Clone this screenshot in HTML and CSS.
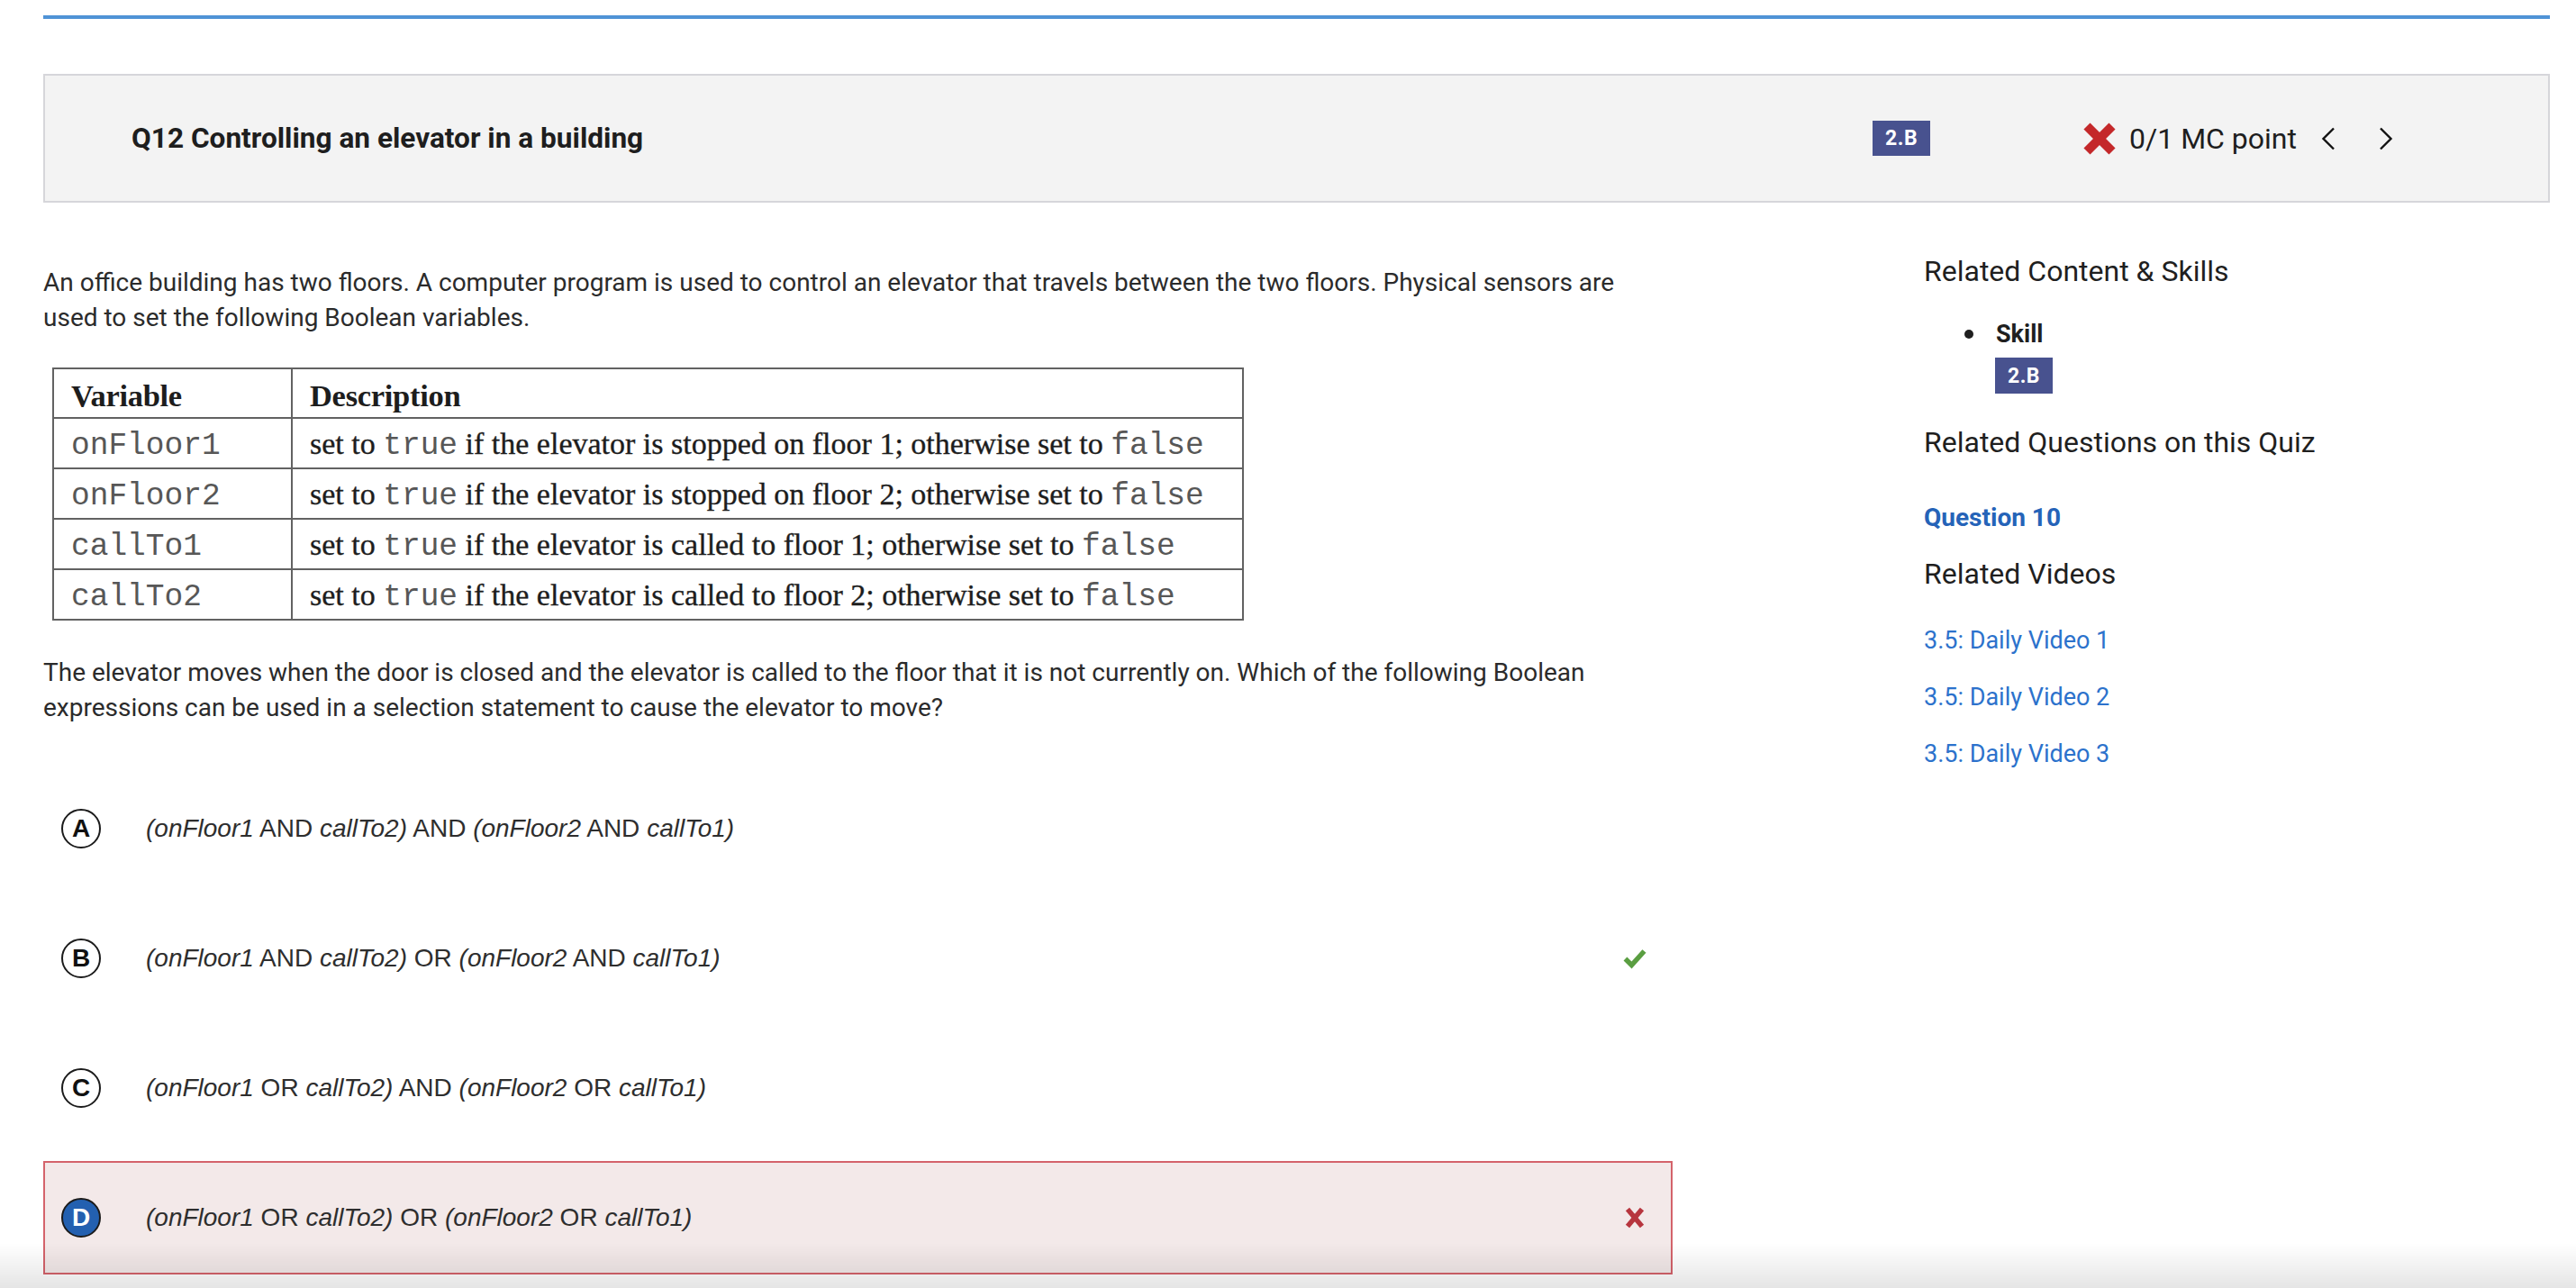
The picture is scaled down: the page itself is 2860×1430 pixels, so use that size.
FILE: index.html
```html
<!DOCTYPE html>
<html lang="en">
<head>
<meta charset="utf-8">
<title>Q12 Controlling an elevator in a building</title>
<link rel="stylesheet" href="styles.css">
</head>
<body>
<div class="page">
  <div class="topbar"></div>
  <header class="qhead">
    <h1 class="qtitle">Q12 Controlling an elevator in a building</h1>
    <span class="badge">2.B</span>
    <div class="score">
      <svg class="xicon" viewBox="0 0 40 40" aria-hidden="true">
        <line x1="6" y1="6" x2="34" y2="34" stroke="#c4282a" stroke-width="10"/>
        <line x1="34" y1="6" x2="6" y2="34" stroke="#c4282a" stroke-width="10"/>
      </svg>
      <span class="pts">0/1 MC point</span>
      <svg class="chev prev" viewBox="0 0 16 26" aria-hidden="true"><polyline points="14,1.5 2.5,13 14,24.5" fill="none" stroke="#111" stroke-width="2.4"/></svg>
      <svg class="chev next" viewBox="0 0 16 26" aria-hidden="true"><polyline points="2,1.5 13.5,13 2,24.5" fill="none" stroke="#111" stroke-width="2.4"/></svg>
    </div>
  </header>

  <div class="main">
    <section class="question">
      <p class="stem first">An office building has two floors. A computer program is used to control an elevator that travels between the two floors. Physical sensors are used to set the following Boolean variables.</p>

      <table class="vars">
        <tr class="hrow"><th class="c1">Variable</th><th>Description</th></tr>
        <tr><td class="c1 code">onFloor1</td><td>set to <code>true</code> if the elevator is stopped on floor 1; otherwise set to <code>false</code></td></tr>
        <tr><td class="c1 code">onFloor2</td><td>set to <code>true</code> if the elevator is stopped on floor 2; otherwise set to <code>false</code></td></tr>
        <tr><td class="c1 code">callTo1</td><td>set to <code>true</code> if the elevator is called to floor 1; otherwise set to <code>false</code></td></tr>
        <tr><td class="c1 code">callTo2</td><td>set to <code>true</code> if the elevator is called to floor 2; otherwise set to <code>false</code></td></tr>
      </table>

      <p class="stem second">The elevator moves when the door is closed and the elevator is called to the floor that it is not currently on. Which of the following Boolean expressions can be used in a selection statement to cause the elevator to move?</p>

      <ol class="options">
        <li class="opt">
          <span class="letter">A</span>
          <span class="expr"><i>(onFloor1</i> AND <i>callTo2)</i> AND <i>(onFloor2</i> AND <i>callTo1)</i></span>
        </li>
        <li class="opt">
          <span class="letter">B</span>
          <span class="expr"><i>(onFloor1</i> AND <i>callTo2)</i> OR <i>(onFloor2</i> AND <i>callTo1)</i></span>
          <svg class="mark" viewBox="0 0 26 24" aria-hidden="true"><polyline points="2.5,12.5 9.5,19.5 23.5,4" fill="none" stroke="#5a9e41" stroke-width="5.5"/></svg>
        </li>
        <li class="opt">
          <span class="letter">C</span>
          <span class="expr"><i>(onFloor1</i> OR <i>callTo2)</i> AND <i>(onFloor2</i> OR <i>callTo1)</i></span>
        </li>
        <li class="opt wrong">
          <span class="letter chosen">D</span>
          <span class="expr"><i>(onFloor1</i> OR <i>callTo2)</i> OR <i>(onFloor2</i> OR <i>callTo1)</i></span>
          <svg class="mark" viewBox="0 0 26 24" aria-hidden="true">
            <line x1="5" y1="2.5" x2="21" y2="21.5" stroke="#b7353e" stroke-width="5.5"/>
            <line x1="21" y1="2.5" x2="5" y2="21.5" stroke="#b7353e" stroke-width="5.5"/>
          </svg>
        </li>
      </ol>
    </section>

    <aside class="side">
      <h3 class="side-h">Related Content &amp; Skills</h3>
      <ul class="skills">
        <li class="skill"><span class="dot"></span>Skill</li>
      </ul>
      <span class="badge side-badge">2.B</span>
      <h3 class="side-h rq">Related Questions on this Quiz</h3>
      <a class="qlink" href="#">Question 10</a>
      <h3 class="side-h rv">Related Videos</h3>
      <a class="vlink first" href="#">3.5: Daily Video 1</a>
      <a class="vlink" href="#">3.5: Daily Video 2</a>
      <a class="vlink" href="#">3.5: Daily Video 3</a>
    </aside>
  </div>
</div>
<div class="shade"></div>
</body>
</html>
```

FILE: styles.css
```css
* { box-sizing: border-box; }
html, body { margin: 0; background: #ffffff; }
body {
  font-family: Roboto, "Liberation Sans", sans-serif;
  color: #2b2b2b;
}

.page { padding: 0 29px 0 48px; }

.topbar {
  height: 4px;
  margin-top: 17px;
  background: #4f93d6;
}

/* question header */
.qhead {
  display: flex;
  align-items: center;
  height: 143px;
  margin-top: 61px;
  padding: 0 172px 0 96px;
  background: #f3f3f3;
  border: 2px solid #d6d6da;
}
.qtitle {
  flex: 1;
  margin: 0;
  font-size: 31.6px;
  font-weight: 700;
  color: #1e1e1e;
}
.badge {
  display: inline-flex;
  align-items: center;
  justify-content: center;
  width: 64px;
  height: 39px;
  background: #48528f;
  color: #ffffff;
  font-family: Roboto, sans-serif;
  font-weight: 700;
  font-size: 23px;
  letter-spacing: 0.5px;
}
.score {
  display: flex;
  align-items: center;
  margin-left: 168px;
}
.xicon { width: 40px; height: 40px; display: block; }
.pts {
  margin-left: 13px;
  font-size: 32px;
  color: #1e1e1e;
}
.chev { width: 16px; height: 26px; display: block; }
.chev.prev { margin-left: 27px; }
.chev.next { margin-left: 48px; }

/* main area */
.main {
  display: flex;
  align-items: flex-start;
}
.question {
  width: 1809px;
  flex: none;
}
.stem {
  margin: 0;
  max-width: 1780px;
  font-size: 28px;
  line-height: 39px;
  color: #2b2b2b;
}
.stem.first { margin-top: 69px; }
.stem.second { margin-top: 38px; }

/* variables table */
.vars {
  margin: 36px 0 0 10px;
  width: 1323px;
  border-collapse: collapse;
  font-family: "Liberation Serif", serif;
  color: #1d1d1d;
}
.vars th, .vars td {
  border: 2px solid #626262;
  padding: 0 0 0 19px;
  text-align: left;
  vertical-align: middle;
}
.vars tr { height: 56px; }
.vars tr.hrow { height: 55px; }
.vars th {
  font-size: 34.5px;
  font-weight: 700;
  padding-top: 6px;
  letter-spacing: -0.3px;
}
.vars td {
  font-size: 34px;
  padding-top: 4px;
  -webkit-text-stroke: 0.35px #1d1d1d;
}
.vars .c1 { width: 265px; }
.vars .code, .vars code {
  font-family: "Liberation Mono", "Courier New", monospace;
  font-size: 34.5px;
  color: #575757;
  -webkit-text-stroke: 0;
}

/* options */
.options {
  list-style: none;
  margin: 52px 0 0;
  padding: 0;
}
.opt {
  display: flex;
  align-items: center;
  height: 126px;
  margin-bottom: 18px;
  padding: 0 27px 0 18px;
  border: 2px solid transparent;
}
.opt.wrong {
  background: #f3e9e9;
  border-color: #d4636b;
}
.letter {
  flex: none;
  display: flex;
  align-items: center;
  justify-content: center;
  width: 44px;
  height: 44px;
  border: 2.5px solid #1b1b1b;
  border-radius: 50%;
  font-family: "Liberation Sans", Arial, sans-serif;
  font-weight: 700;
  font-size: 28px;
  color: #111111;
}
.letter.chosen {
  background: #2360b0;
  color: #ffffff;
}
.expr {
  flex: 1;
  margin-left: 50px;
  font-family: "Liberation Sans", Arial, sans-serif;
  font-size: 28px;
  color: #2e2e2e;
}
.mark { width: 26px; height: 24px; flex: none; display: block; }

/* sidebar */
.side {
  flex: 1;
  margin-left: 279px;
  padding-top: 57px;
  display: flex;
  flex-direction: column;
  align-items: flex-start;
}
.side-h {
  margin: 0;
  font-size: 32px;
  font-weight: 400;
  line-height: 38px;
  color: #1f1f1f;
}
.skills {
  list-style: none;
  margin: 34px 0 0;
  padding: 0;
}
.skill {
  display: flex;
  align-items: center;
  font-size: 27px;
  font-weight: 700;
  line-height: 34px;
  color: #1f1f1f;
}
.dot {
  width: 10px;
  height: 10px;
  border-radius: 50%;
  background: #1f1f1f;
  margin: 0 25px 0 45px;
}
.side-badge { margin: 9px 0 0 79px; height: 40px; }
.side-h.rq { margin-top: 35px; }
.qlink {
  margin-top: 48px;
  font-size: 28px;
  font-weight: 700;
  line-height: 34px;
  color: #2563b8;
  text-decoration: none;
}
.side-h.rv { margin-top: 26px; }
.vlink {
  margin-top: 29px;
  font-size: 27px;
  line-height: 34px;
  color: #2c72cc;
  text-decoration: none;
}
.vlink.first { margin-top: 38px; }

/* bottom window shadow */
.shade {
  position: fixed;
  left: 0;
  right: 0;
  bottom: 0;
  height: 50px;
  background: linear-gradient(to bottom, rgba(0,0,0,0), rgba(0,0,0,0.1));
  pointer-events: none;
}
```
